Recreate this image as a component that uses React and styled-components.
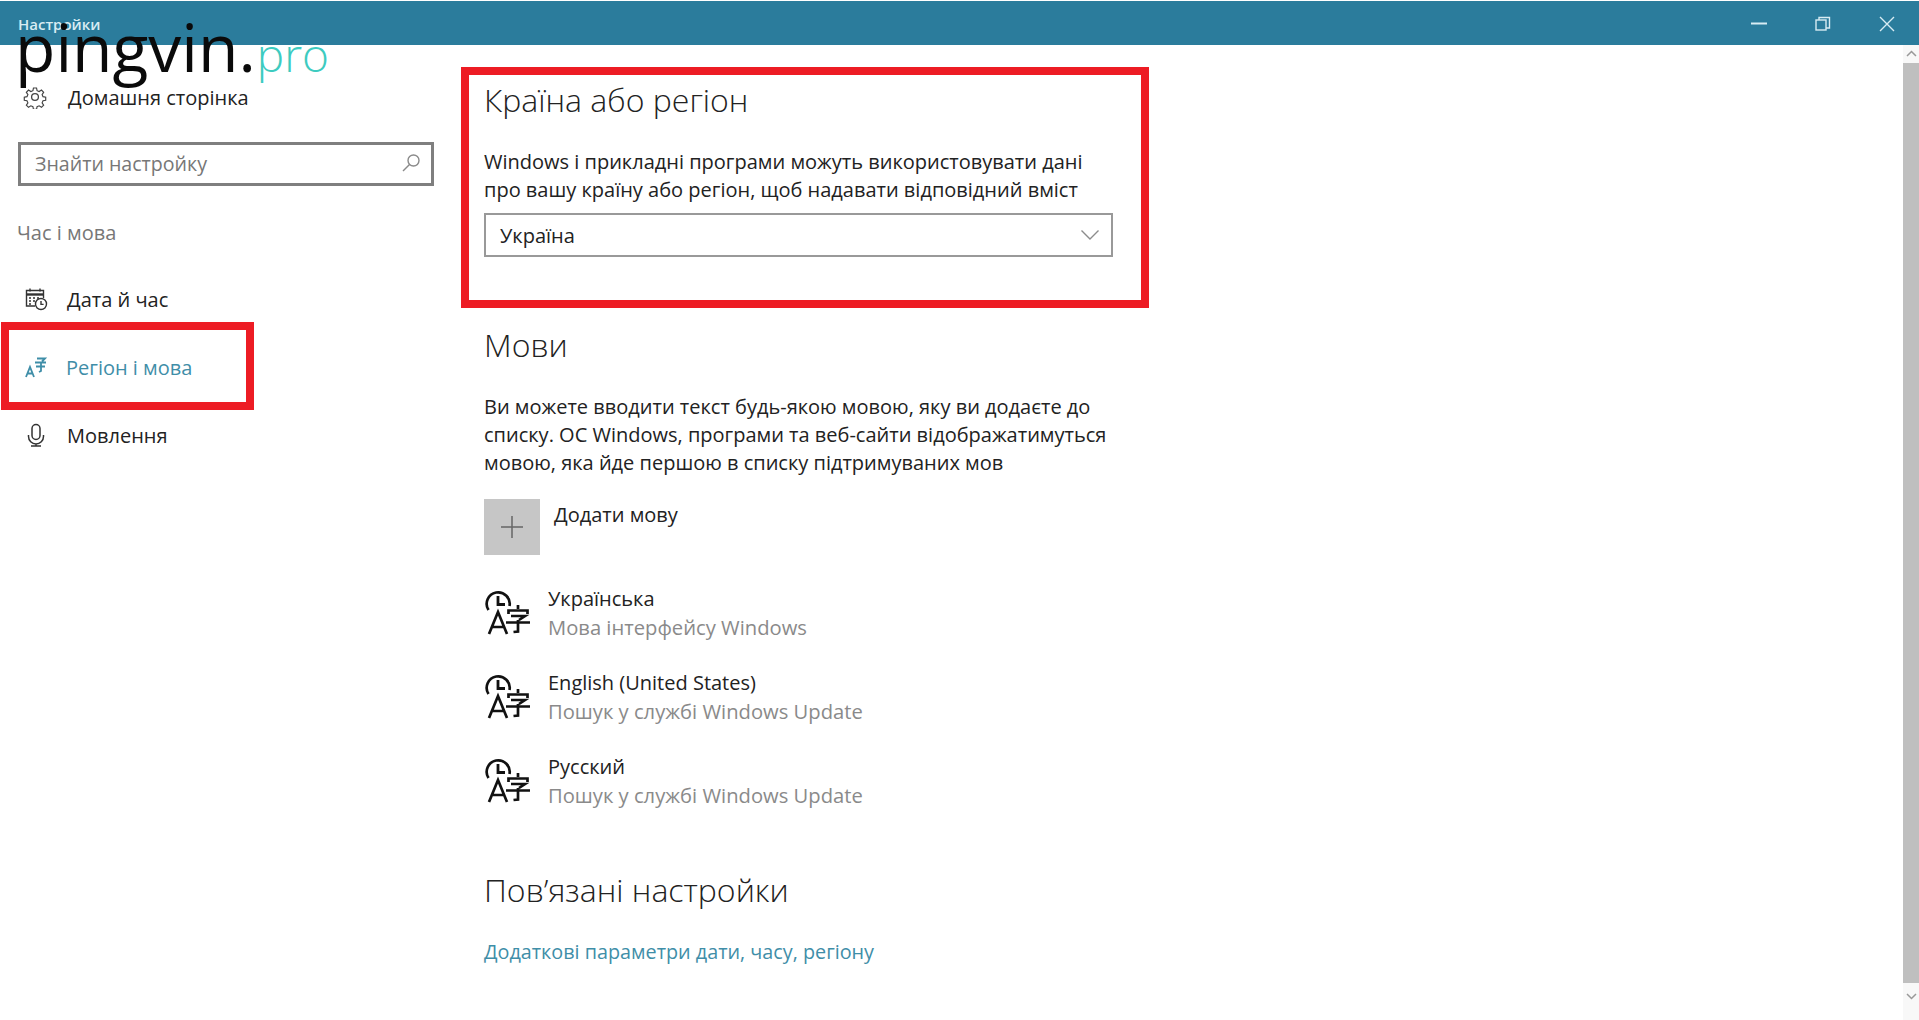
import React from 'react';
import styled, { createGlobalStyle } from 'styled-components';

const GlobalStyle = createGlobalStyle`
  html, body {
    margin: 0;
    padding: 0;
    background: #fff;
    overflow: hidden;
  }
  body {
    font-family: "Open Sans", "Noto Sans", sans-serif;
    color: #1a1a1a;
  }
`;

const Page = styled.div`
  width: 1919px;
  height: 1020px;
  display: flex;
  flex-direction: column;
  background: #fff;
  position: relative;
  overflow: hidden;
`;

const TitleBar = styled.header`
  height: 45px;
  flex: none;
  display: flex;
  align-items: center;
  justify-content: space-between;
  background: #2b7c9c;
  border-top: 1px solid #fff;
  box-sizing: border-box;
  padding: 1px 0 0 18px;
  position: relative;
  z-index: 2;
`;

const TitleText = styled.span`
  font-size: 15px;
  font-weight: 600;
  color: #d8ecf3;
`;

const WindowButtons = styled.div`
  display: flex;
  align-items: center;
`;

const WindowButton = styled.div`
  width: 64px;
  height: 42px;
  display: flex;
  align-items: center;
  justify-content: center;
  color: #d8ecf3;
`;

// the black word lies over the title bar, the teal one goes under it
const Watermark = styled.div`
  position: absolute;
  left: 15px;
  top: 4px;
  font-family: "Open Sans", sans-serif;
  line-height: 84px;
  white-space: nowrap;
`;

const WatermarkName = styled.span`
  position: relative;
  z-index: 3;
  font-size: 66px;
  color: #0a0a0a;
`;

const WatermarkAccent = styled.span`
  position: relative;
  z-index: 1;
  margin-left: 1px;
  font-size: 46px;
  font-weight: 300;
  color: #3dcbc0;
`;

const Body = styled.div`
  flex: 1;
  display: flex;
  min-height: 0;
`;

const Sidebar = styled.nav`
  width: 461px;
  flex: none;
  box-sizing: border-box;
  padding: 36px 0 0 18px;
`;

const HomeRow = styled.div`
  display: flex;
  align-items: center;
  height: 32px;
  padding-left: 5px;
  gap: 21px;
  font-size: 20px;
  color: #222;
`;

const SearchBox = styled.div`
  width: 416px;
  height: 44px;
  box-sizing: border-box;
  margin-top: 29px;
  border: 3px solid #7f7f7f;
  display: flex;
  align-items: center;
  justify-content: space-between;
  padding: 0 10px 2px 14px;
  font-size: 19.6px;
  color: #777;
`;

const SectionLabel = styled.div`
  margin: 32px 0 0 -1px;
  height: 30px;
  line-height: 30px;
  font-size: 20px;
  color: #777;
`;

const NavList = styled.div`
  margin-top: 17px;
  display: flex;
  flex-direction: column;
`;

const NavItem = styled.div`
  height: 68px;
  display: flex;
  align-items: center;
  gap: ${(p) => (p.$active ? '18px' : '19px')};
  padding-left: 6px;
  font-size: 20px;
  color: ${(p) => (p.$active ? '#3f8ea8' : '#222')};
  position: relative;
`;

const SideHighlight = styled.div`
  position: absolute;
  left: -17px;
  top: -11px;
  width: 253px;
  height: 88px;
  box-sizing: border-box;
  border: 8px solid #ed1c24;
`;

const Content = styled.main`
  flex: 1;
  padding: 22px 0 0 0;
  min-width: 0;
`;

const RegionBox = styled.section`
  width: 688px;
  height: 241px;
  box-sizing: border-box;
  border: 8px solid #ed1c24;
  padding: 0 0 0 15px;
`;

const Heading = styled.h2`
  margin: ${(p) => p.$top}px 0 0;
  font-size: 32px;
  line-height: 44px;
  font-weight: 300;
  color: #222;
`;

const Paragraph = styled.p`
  margin: ${(p) => p.$top}px 0 0;
  font-size: 20px;
  line-height: 28px;
  color: #222;
`;

const Select = styled.div`
  width: 629px;
  height: 44px;
  box-sizing: border-box;
  margin-top: 9px;
  border: 2px solid #999;
  display: flex;
  align-items: center;
  justify-content: space-between;
  padding: 0 11px 0 14px;
  font-size: 20px;
  color: #222;
`;

const Section = styled.section`
  padding-left: 23px;
`;

const AddRow = styled.div`
  display: flex;
  align-items: flex-start;
  gap: 14px;
  margin-top: 22px;
  font-size: 20px;
  line-height: 32px;
  color: #222;
`;

const AddTile = styled.div`
  width: 56px;
  height: 56px;
  background: #c6c6c6;
  display: flex;
  align-items: center;
  justify-content: center;
  color: #666;
`;

const LanguageList = styled.div`
  margin-top: 29px;
  display: flex;
  flex-direction: column;
  gap: 27px;
`;

const LanguageRow = styled.div`
  display: flex;
  align-items: center;
  gap: 18px;
  height: 57px;
`;

const LanguageName = styled.div`
  font-size: 20px;
  line-height: 28px;
  color: #222;
`;

const LanguageNote = styled.div`
  font-size: 20.2px;
  line-height: 28px;
  color: #8a8a8a;
`;

const RelatedLink = styled.a`
  display: block;
  margin-top: 26px;
  font-size: 19.8px;
  line-height: 28px;
  color: #3f8ea8;
`;

const Scrollbar = styled.div`
  position: absolute;
  right: 0;
  top: 45px;
  bottom: 0;
  width: 16px;
  background: #f8f8f8;
  display: flex;
  flex-direction: column;
  align-items: center;
`;

const ScrollThumb = styled.div`
  width: 16px;
  height: 920px;
  background: #bfbfbf;
`;

const GearIcon = () => (
  <svg width="24" height="24" viewBox="0 0 24 24" fill="none" stroke="#444" strokeWidth="1.3">
    <circle cx="12" cy="12" r="3.4" />
    <path d="M10.3 2h3.4l.6 3 2.3 1 2.6-1.7 2.4 2.4-1.7 2.6 1 2.3 3 .6v3.4l-3 .6-1 2.3 1.7 2.6-2.4 2.4-2.6-1.7-2.3 1-.6 3h-3.4l-.6-3-2.3-1-2.6 1.7-2.4-2.4 1.7-2.6-1-2.3-3-.6v-3.4l3-.6 1-2.3-1.7-2.6 2.4-2.4 2.6 1.7 2.3-1z" transform="translate(1.2 1.2) scale(.9)" />
  </svg>
);

const SearchIcon = () => (
  <svg width="20" height="20" viewBox="0 0 20 20" fill="none" stroke="#8a8a8a" strokeWidth="1.4">
    <circle cx="12.5" cy="7.5" r="5.5" />
    <path d="M8.500 11.500L2 18" />
  </svg>
);

const CalendarIcon = () => (
  <svg width="24" height="24" viewBox="0 0 24 24" fill="none" stroke="#333" strokeWidth="1.4">
    <path d="M11 19H2.500V3.500h17V11" />
    <path d="M2.500 7.500h17" strokeWidth="2.4" />
    <path d="M6 1.500v3M16 1.500v3" />
    <path d="M5 11h2M9 11h2M13 11h2M5 14h2M9 14h2M5 17h2" strokeWidth="1.6" />
    <circle cx="17" cy="17" r="5.500" />
    <path d="M17 14v3.400h2.600" />
  </svg>
);

const RegionIcon = () => (
  <svg width="24" height="24" viewBox="0 0 24 24" fill="none" stroke="#3f8ea8" strokeWidth="1.8">
    <path d="M2 22l4-10 4 10M3.500 18.500h5" />
    <path d="M11 7.500h11M13 3.500h8l-3 3M12 11.500h9M17 8v8l-2 1" />
  </svg>
);

const MicIcon = () => (
  <svg width="24" height="24" viewBox="0 0 24 24" fill="none" stroke="#333" strokeWidth="1.5">
    <rect x="8" y="1.500" width="8" height="15" rx="4" />
    <path d="M4.500 12v1.500a7.500 7.500 0 0 0 15 0V12M12 21v2M7 23h10" />
  </svg>
);

const LanguageIcon = () => (
  <svg width="46" height="46" viewBox="0 0 46 46" fill="none" stroke="#111" strokeWidth="2.7">
    <path d="M4.500 20A11.500 11.500 0 1 1 25.500 16" />
    <path d="M14 6v8.500h7" strokeWidth="2.8" />
    <path d="M5 44l9-22 9 22M8 37h12" />
    <path d="M34 15v4M24.500 24v-3.500h19V24M27 26h14l-6 4M22 32.500h24M34 30v11.500l-4.500.5" />
  </svg>
);

const Chevron = () => (
  <svg width="20" height="12" viewBox="0 0 20 12" fill="none" stroke="#8c8c8c" strokeWidth="1.4">
    <path d="M1.500 1.500L10 10l8.500-8.500" />
  </svg>
);

const languages = [
  ['Українська', 'Мова інтерфейсу Windows'],
  ['English (United States)', 'Пошук у службі Windows Update'],
  ['Русский', 'Пошук у службі Windows Update'],
];

export default function App() {
  return (
    <Page>
      <GlobalStyle />
      <TitleBar>
        <TitleText>Настройки</TitleText>
        <WindowButtons>
          <WindowButton>
            <svg width="16" height="3"><rect width="16" height="2" y="0.5" fill="currentColor" /></svg>
          </WindowButton>
          <WindowButton>
            <svg width="16" height="16" viewBox="0 0 16 16" fill="none" stroke="currentColor" strokeWidth="1.4">
              <rect x="1" y="4" width="10" height="10" />
              <path d="M4 4V1.500h10.500V12H11" />
            </svg>
          </WindowButton>
          <WindowButton>
            <svg width="16" height="16" viewBox="0 0 16 16" stroke="currentColor" strokeWidth="1.4">
              <path d="M1 1l14 14M15 1L1 15" />
            </svg>
          </WindowButton>
        </WindowButtons>
      </TitleBar>
      <Watermark>
        <WatermarkName>pingvin.</WatermarkName>
        <WatermarkAccent>pro</WatermarkAccent>
      </Watermark>
      <Body>
        <Sidebar>
          <HomeRow><GearIcon />Домашня сторінка</HomeRow>
          <SearchBox>Знайти настройку<SearchIcon /></SearchBox>
          <SectionLabel>Час і мова</SectionLabel>
          <NavList>
            <NavItem><CalendarIcon />Дата й час</NavItem>
            <NavItem $active>
              <SideHighlight />
              <RegionIcon />Регіон і мова
            </NavItem>
            <NavItem><MicIcon />Мовлення</NavItem>
          </NavList>
        </Sidebar>
        <Content>
          <RegionBox>
            <Heading $top={3}>Країна або регіон</Heading>
            <Paragraph $top={26}>
              Windows і прикладні програми можуть використовувати дані<br />
              про вашу країну або регіон, щоб надавати відповідний вміст
            </Paragraph>
            <Select>Україна<Chevron /></Select>
          </RegionBox>
          <Section>
            <Heading $top={15}>Мови</Heading>
            <Paragraph $top={26}>
              Ви можете вводити текст будь-якою мовою, яку ви додаєте до<br />
              списку. ОС Windows, програми та веб-сайти відображатимуться<br />
              мовою, яка йде першою в списку підтримуваних мов
            </Paragraph>
            <AddRow>
              <AddTile>
                <svg width="24" height="24" stroke="currentColor" strokeWidth="1.5"><path d="M12 1v22M1 12h22" /></svg>
              </AddTile>
              Додати мову
            </AddRow>
            <LanguageList>
              {languages.map(([name, note]) => (
                <LanguageRow key={name}>
                  <LanguageIcon />
                  <div>
                    <LanguageName>{name}</LanguageName>
                    <LanguageNote>{note}</LanguageNote>
                  </div>
                </LanguageRow>
              ))}
            </LanguageList>
            <Heading $top={59}>Пов’язані настройки</Heading>
            <RelatedLink>Додаткові параметри дати, часу, регіону</RelatedLink>
          </Section>
        </Content>
      </Body>
      <Scrollbar>
        <svg width="11" height="18" viewBox="0 0 11 18" fill="none" stroke="#999" strokeWidth="1.5"><path d="M1 11l4.500-4.500L10 11" /></svg>
        <ScrollThumb />
        <svg width="11" height="26" viewBox="0 0 11 26" fill="none" stroke="#999" strokeWidth="1.5"><path d="M1 11l4.500 4.500L10 11" /></svg>
      </Scrollbar>
    </Page>
  );
}
